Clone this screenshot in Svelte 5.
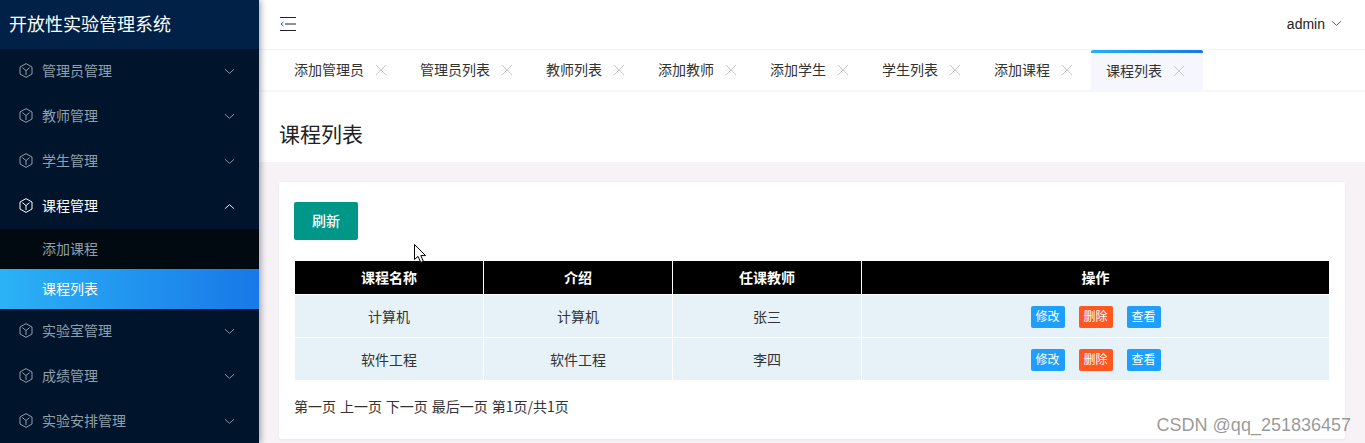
<script>
    const menus = [
        { name: "管理员管理" },
        { name: "教师管理" },
        { name: "学生管理" },
        { name: "课程管理", open: true, subs: ["添加课程", "课程列表"] },
        { name: "实验室管理" },
        { name: "成绩管理" },
        { name: "实验安排管理" },
    ];
    const tabs = ["添加管理员", "管理员列表", "教师列表", "添加教师", "添加学生", "学生列表", "添加课程", "课程列表"];
    const rows = [
        ["计算机", "计算机", "张三"],
        ["软件工程", "软件工程", "李四"],
    ];
</script>

<div class="layout">
    <aside class="side">
        <div class="logo">开放性实验管理系统</div>
        {#each menus as m}
            <div class="menu" class:open={m.open}>
                <svg class="cube" viewBox="0 0 14 15" width="14" height="15" fill="none" stroke="currentColor" stroke-width="1">
                    <path d="M7 .6 13 4V11L7 14.4 1 11V4Z" />
                    <path d="M3.4 4.6 7 7.6 10.6 4.6M7 7.6V12" />
                </svg>
                <span class="menu-name">{m.name}</span>
                <svg class="arrow" viewBox="0 0 12 7" width="11" height="7" fill="none" stroke="currentColor" stroke-width="1">
                    {#if m.open}
                        <path d="M1 6 6 1.5 11 6" />
                    {:else}
                        <path d="M1 1 6 5.5 11 1" />
                    {/if}
                </svg>
            </div>
            {#if m.subs}
                {#each m.subs as s, i}
                    <div class="sub" class:on={i === 1}>{s}</div>
                {/each}
            {/if}
        {/each}
    </aside>

    <main class="main">
        <header class="top">
            <svg class="fold" viewBox="0 0 16 14" width="16" height="14" fill="none" stroke="#222" stroke-width="1">
                <path d="M0 .5H16M5 7H16M0 13.5H16" />
                <path d="M3.5 5 1 7 3.5 9" stroke="#1668c4" />
            </svg>
            <div class="user">
                <span>admin</span>
                <svg viewBox="0 0 12 7" width="11" height="7" fill="none" stroke="#555" stroke-width="1">
                    <path d="M1 1 6 5.5 11 1" />
                </svg>
            </div>
        </header>

        <nav class="tabs">
            {#each tabs as t, i}
                <div class="tab" class:active={i === tabs.length - 1}>
                    <span class="tab-name">{t}</span>
                    <svg viewBox="0 0 12 12" width="12" height="12" fill="none" stroke="#c8c8c8" stroke-width="1">
                        <path d="M1 1 11 11M11 1 1 11" />
                    </svg>
                </div>
            {/each}
        </nav>

        <div class="title">课程列表</div>

        <div class="content">
            <section class="card">
                <button class="refresh">刷新</button>
                <table>
                    <thead>
                        <tr>
                            <th>课程名称</th>
                            <th>介绍</th>
                            <th>任课教师</th>
                            <th>操作</th>
                        </tr>
                    </thead>
                    <tbody>
                        {#each rows as r}
                            <tr>
                                {#each r as c}
                                    <td>{c}</td>
                                {/each}
                                <td>
                                    <div class="ops">
                                        <span class="btn">修改</span>
                                        <span class="btn red">删除</span>
                                        <span class="btn">查看</span>
                                    </div>
                                </td>
                            </tr>
                        {/each}
                    </tbody>
                </table>
                <p class="pager">第一页 上一页 下一页 最后一页 第1页/共1页</p>
            </section>
        </div>
    </main>

    <svg class="cursor" viewBox="0 0 14 20" width="14" height="20">
        <path d="M.5.5V15.5L4 12.4 6.8 18.5 9.4 17.3 6.8 11.6H11.5Z" fill="#fff" stroke="#000" stroke-width="1" />
    </svg>
    <div class="mark">CSDN @qq_251836457</div>
</div>

<style>
    :global(body) {
        margin: 0;
    }
    .layout {
        position: relative;
        display: flex;
        height: 443px;
        overflow: hidden;
        font-family: "Noto Sans CJK SC", "Liberation Sans", sans-serif;
        font-size: 13px;
        color: #333;
    }
    .side {
        flex: 0 0 259px;
        background: #00142b;
        color: #8fa0ad;
        box-shadow: 2px 0 6px rgba(0, 21, 41, 0.35);
        position: relative;
        z-index: 2;
    }
    .logo {
        height: 49px;
        line-height: 46px;
        padding-left: 9px;
        background: #012146;
        color: #fff;
        font-size: 18px;
        white-space: nowrap;
    }
    .menu {
        display: flex;
        align-items: center;
        height: 45px;
        padding: 0 24px 0 19px;
        box-sizing: border-box;
    }
    .menu.open {
        color: #fff;
    }
    .cube {
        flex: none;
        margin: -3px 9px 0 0;
    }
    .menu-name {
        flex: 1;
        font-size: 14px;
        padding-bottom: 4px;
    }
    .sub {
        height: 40px;
        line-height: 38px;
        padding-left: 42px;
        background: #000a10;
        font-size: 14px;
    }
    .sub.on {
        background: linear-gradient(90deg, #2bb2f6, #1878e8);
        color: #fff;
    }
    .main {
        flex: 1;
        min-width: 0;
        display: flex;
        flex-direction: column;
        background: #f6f2f6;
    }
    .top {
        flex: none;
        height: 49px;
        display: flex;
        align-items: center;
        justify-content: space-between;
        padding: 0 23px 0 21px;
        background: #fff;
        border-bottom: 1px solid #f2f2f4;
    }
    .fold {
        margin-top: -2px;
    }
    .user {
        display: flex;
        align-items: center;
        gap: 6px;
        font-family: "Liberation Sans", sans-serif;
        font-size: 14px;
        color: #222;
        margin-top: -2px;
    }
    .tabs {
        flex: none;
        display: flex;
        height: 40px;
        padding-left: 20px;
        background: #fff;
        border-bottom: 2px solid #f6f6fb;
    }
    .tab {
        display: flex;
        align-items: center;
        gap: 11px;
        padding: 0 18px 0 15px;
        font-size: 14px;
        box-sizing: border-box;
        position: relative;
    }
    .tab-name {
        padding-bottom: 2px;
    }
    .tab.active {
        background: #f6f7fe;
        margin-bottom: -1px;
    }
    .tab.active::before {
        content: "";
        position: absolute;
        left: 0;
        right: 0;
        top: 0;
        height: 3px;
        border-radius: 2px 2px 0 0;
        background: linear-gradient(90deg, #28aef5, #1878e8);
    }
    .title {
        flex: none;
        height: 70px;
        line-height: 82px;
        padding-left: 20px;
        background: #fff;
        color: #222;
        font-size: 21px;
    }
    .content {
        flex: 1;
        padding: 20px 20px 0;
    }
    .card {
        height: 257px;
        box-sizing: border-box;
        padding: 20px 15px;
        background: #fff;
        box-shadow: 0 1px 3px rgba(0, 0, 0, 0.06);
        border-radius: 2px;
    }
    .refresh {
        display: block;
        width: 64px;
        height: 38px;
        padding: 0 0 2px;
        border: 0;
        border-radius: 2px;
        background: #009688;
        color: #fff;
        font: inherit;
        font-size: 14px;
        font-weight: 500;
    }
    table {
        width: 1036px;
        margin-top: 20px;
        table-layout: fixed;
        border-collapse: separate;
        border-spacing: 1px;
        border: 0;
    }
    th:nth-child(-n + 3) {
        width: 188px;
    }
    th {
        height: 33px;
        padding: 0 0 2px;
        box-sizing: border-box;
        background: #000;
        color: #fff;
        font-size: 14px;
        font-weight: 700;
    }
    td {
        height: 42px;
        padding: 0;
        background: #e6f2f7;
        color: #333;
        font-size: 14px;
        text-align: center;
    }
    .ops {
        display: flex;
        justify-content: center;
        gap: 14px;
        padding-top: 2px;
    }
    .btn {
        width: 34px;
        height: 22px;
        line-height: 20px;
        border-radius: 2px;
        background: #1e9fff;
        color: #fff;
        font-size: 12px;
    }
    .btn.red {
        background: #ff5722;
    }
    .pager {
        margin: 15px 0 0;
        font-size: 14px;
        line-height: 20px;
        word-spacing: 0.8px;
        color: #333;
    }
    .cursor {
        position: absolute;
        left: 414px;
        top: 244px;
        z-index: 3;
    }
    .mark {
        position: absolute;
        right: 14px;
        bottom: 7px;
        z-index: 3;
        font-family: "Liberation Sans", sans-serif;
        font-size: 18px;
        color: rgba(120, 120, 120, 0.75);
    }
</style>
